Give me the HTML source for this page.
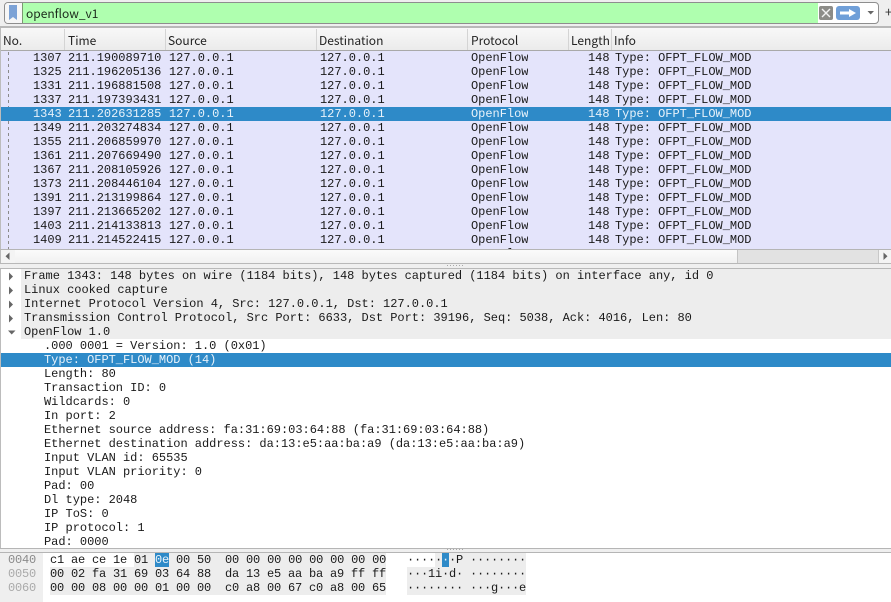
<!DOCTYPE html>
<html><head><meta charset="utf-8">
<style>
html,body{margin:0;padding:0;background:#efefef}
#r{position:relative;width:891px;height:602px;overflow:hidden;background:#efefef}
#r div{position:absolute}
.m{font:12px/14px "Liberation Mono",monospace;color:#1a1a1a;white-space:pre;letter-spacing:-.02px}
.s{font:12px/16px "Noto Sans CJK SC","Liberation Sans",sans-serif;color:#222;white-space:pre}
.hs{top:29px;width:1px;height:21px;background:#d4d4d4}
.hh{top:33px}
.l{top:51px;height:199px;overflow:hidden}
.w{color:#e8f2fa}
.dots{height:1px;width:18px;background:repeating-linear-gradient(90deg,#a8a8a8 0 1px,transparent 1px 3px)}
</style></head><body><div id="r">

<!-- filter bar -->
<div style="left:4px;top:2px;width:873px;height:20px;border:1px solid #8e8e8e;border-radius:4px;background:#fff"></div>
<div style="left:5px;top:3px;width:17px;height:20px;background:#f6f6f6;border-radius:3px 0 0 3px"></div>
<svg style="position:absolute;left:9px;top:5px" width="9" height="16"><path d="M0 0H8V15L4 12L0 15Z" fill="#7ba2d6"/></svg>
<div style="left:22px;top:3px;width:1px;height:20px;background:#7a9a70"></div>
<div style="left:23px;top:3px;width:795px;height:20px;background:#afffaf"></div>
<div class="s" style="left:26px;top:6px;color:#1c2a1c">openflow_v1</div>
<svg style="position:absolute;left:819px;top:6px" width="15" height="15"><rect width="14" height="14" x="0" y="0" rx="2" fill="#8c8c88"/><path d="M3 3L11 11M11 3L3 11" stroke="#f2f2f2" stroke-width="1.4"/></svg>
<svg style="position:absolute;left:836px;top:6px" width="25" height="15"><rect width="24" height="14" rx="3" fill="#6f9fd8"/><path d="M4 5.5H13V3L20 7L13 11V8.5H4Z" fill="#fff"/></svg>
<svg style="position:absolute;left:867px;top:10px" width="8" height="6"><path d="M0.5 1H7L3.7 4.5Z" fill="#666"/></svg>
<div class="s" style="left:885px;top:4px;font-size:13px;color:#333">+</div>

<!-- list header -->
<div style="left:0;top:26px;width:891px;height:2px;background:#b8b8b8"></div>
<div style="left:0;top:28px;width:891px;height:22px;background:linear-gradient(#f8f8f8,#ebebeb)"></div>
<div style="left:0;top:50px;width:891px;height:1px;background:#a9a9a9"></div>
<div style="left:0;top:28px;width:1px;height:236px;background:#bcbcbc"></div>
<div class="hs" style="left:64px"></div><div class="hs" style="left:165px"></div><div class="hs" style="left:316px"></div><div class="hs" style="left:467px"></div><div class="hs" style="left:568px"></div><div class="hs" style="left:611px"></div>
<div class="s hh" style="left:3px">No.</div>
<div class="s hh" style="left:68px">Time</div>
<div class="s hh" style="left:168px">Source</div>
<div class="s hh" style="left:319px">Destination</div>
<div class="s hh" style="left:471px">Protocol</div>
<div class="s hh" style="left:571px">Length</div>
<div class="s hh" style="left:614px">Info</div>

<!-- packet list -->
<div style="left:1px;top:51px;width:890px;height:198px;background:#e4e4fb"></div>
<div style="left:1px;top:107px;width:890px;height:14px;background:#2e8ac8"></div>
<div style="left:8px;top:52px;width:1px;height:55px;background:repeating-linear-gradient(#8a8a8a 0 3px,transparent 3px 6px)"></div>
<div style="left:8px;top:121px;width:1px;height:128px;background:repeating-linear-gradient(#8a8a8a 0 3px,transparent 3px 6px)"></div>
<div class="m l" style="left:33px">1307
1325
1331
1337
<span class="w">1343</span>
1349
1355
1361
1367
1373
1391
1397
1403
1409
1415</div>
<div class="m l" style="left:68px;height:198px">211.190089710
211.196205136
211.196881508
211.197393431
<span class="w">211.202631285</span>
211.203274834
211.206859970
211.207669490
211.208105926
211.208446104
211.213199864
211.213665202
211.214133813
211.214522415
211.215473210</div>
<div class="m l" style="left:169px;height:198px">127.0.0.1
127.0.0.1
127.0.0.1
127.0.0.1
<span class="w">127.0.0.1</span>
127.0.0.1
127.0.0.1
127.0.0.1
127.0.0.1
127.0.0.1
127.0.0.1
127.0.0.1
127.0.0.1
127.0.0.1
127.0.0.1</div>
<div class="m l" style="left:320px;height:198px">127.0.0.1
127.0.0.1
127.0.0.1
127.0.0.1
<span class="w">127.0.0.1</span>
127.0.0.1
127.0.0.1
127.0.0.1
127.0.0.1
127.0.0.1
127.0.0.1
127.0.0.1
127.0.0.1
127.0.0.1
127.0.0.1</div>
<div class="m l" style="left:471px;height:198px">OpenFlow
OpenFlow
OpenFlow
OpenFlow
<span class="w">OpenFlow</span>
OpenFlow
OpenFlow
OpenFlow
OpenFlow
OpenFlow
OpenFlow
OpenFlow
OpenFlow
OpenFlow
OpenFlow</div>
<div class="m l" style="left:588px;height:198px">148
148
148
148
<span class="w">148</span>
148
148
148
148
148
148
148
148
148
148</div>
<div class="m l" style="left:615px;height:198px">Type: OFPT_FLOW_MOD
Type: OFPT_FLOW_MOD
Type: OFPT_FLOW_MOD
Type: OFPT_FLOW_MOD
<span class="w">Type: OFPT_FLOW_MOD</span>
Type: OFPT_FLOW_MOD
Type: OFPT_FLOW_MOD
Type: OFPT_FLOW_MOD
Type: OFPT_FLOW_MOD
Type: OFPT_FLOW_MOD
Type: OFPT_FLOW_MOD
Type: OFPT_FLOW_MOD
Type: OFPT_FLOW_MOD
Type: OFPT_FLOW_MOD
Type: OFPT_FLOW_MOD</div>

<!-- horizontal scrollbar -->
<div style="left:0;top:249px;width:891px;height:1px;background:#b5b5b5"></div>
<div style="left:1px;top:250px;width:890px;height:13px;background:#f4f4f4"></div>
<div style="left:15px;top:250px;width:722px;height:13px;background:linear-gradient(#fbfbfb,#f1f1f1)"></div>
<div style="left:737px;top:250px;width:1px;height:13px;background:#c4c4c4"></div>
<div style="left:738px;top:250px;width:140px;height:13px;background:#e2e2e2"></div>
<div style="left:878px;top:250px;width:1px;height:13px;background:#c8c8c8"></div>
<svg style="position:absolute;left:5px;top:252px" width="6" height="9"><path d="M4.5 0.5V8L0.5 4.2Z" fill="#666"/></svg>
<svg style="position:absolute;left:883px;top:252px" width="6" height="9"><path d="M0.5 0.5V8L4.5 4.2Z" fill="#666"/></svg>
<div style="left:0;top:263px;width:891px;height:1px;background:#b8b8b8"></div>
<div class="dots" style="left:447px;top:265px"></div>
<div style="left:0;top:268px;width:891px;height:1px;background:#b8b8b8"></div>

<!-- details -->
<div style="left:0;top:269px;width:891px;height:279px;background:#fff"></div>
<div style="left:0;top:269px;width:1px;height:279px;background:#bcbcbc"></div>
<div style="left:21px;top:269px;width:870px;height:70px;background:#ededed"></div>
<div style="left:1px;top:353px;width:890px;height:14px;background:#2e8ac8"></div>
<svg style="position:absolute;left:8px;top:272px" width="8" height="70" fill="#666"><path d="M1 0.5V8.5L5 4.5Z"/><path d="M1 14.5V22.5L5 18.5Z"/><path d="M1 28.5V36.5L5 32.5Z"/><path d="M1 42.5V50.5L5 46.5Z"/><path d="M0 58.5H7.5L3.7 62.5Z"/></svg>
<div class="m" style="left:24px;top:269px">Frame 1343: 148 bytes on wire (1184 bits), 148 bytes captured (1184 bits) on interface any, id 0
Linux cooked capture
Internet Protocol Version 4, Src: 127.0.0.1, Dst: 127.0.0.1
Transmission Control Protocol, Src Port: 6633, Dst Port: 39196, Seq: 5038, Ack: 4016, Len: 80
OpenFlow 1.0</div>
<div class="m" style="left:44px;top:339px">.000 0001 = Version: 1.0 (0x01)
<span class="w">Type: OFPT_FLOW_MOD (14)</span>
Length: 80
Transaction ID: 0
Wildcards: 0
In port: 2
Ethernet source address: fa:31:69:03:64:88 (fa:31:69:03:64:88)
Ethernet destination address: da:13:e5:aa:ba:a9 (da:13:e5:aa:ba:a9)
Input VLAN id: 65535
Input VLAN priority: 0
Pad: 00
Dl type: 2048
IP ToS: 0
IP protocol: 1
Pad: 0000</div>
<div style="left:0;top:548px;width:891px;height:1px;background:#b5b5b5"></div>
<div class="dots" style="left:447px;top:549px"></div>
<div style="left:0;top:552px;width:891px;height:1px;background:#b5b5b5"></div>

<!-- hex -->
<div style="left:0;top:553px;width:891px;height:49px;background:#fff"></div>
<div style="left:0;top:553px;width:43px;height:49px;background:#efefef"></div>
<div style="left:134px;top:553px;width:252px;height:14px;background:#ededed"></div>
<div style="left:50px;top:567px;width:336px;height:28px;background:#ededed"></div>
<div style="left:435px;top:553px;width:91px;height:14px;background:#ededed"></div>
<div style="left:407px;top:567px;width:119px;height:28px;background:#ededed"></div>
<div style="left:155px;top:553px;width:14px;height:14px;background:#2e8ac8"></div>
<div style="left:442px;top:553px;width:7px;height:14px;background:#2e8ac8"></div>
<div class="m" style="left:8px;top:553px;letter-spacing:-.2px;color:#8a8a8a">0040</div>
<div class="m" style="left:8px;top:567px;letter-spacing:-.2px;color:#aaa">0050
0060</div>
<div class="m" style="left:50px;top:553px;letter-spacing:-.2px">c1 ae ce 1e 01 <span class="w">0e</span> 00 50  00 00 00 00 00 00 00 00
00 02 fa 31 69 03 64 88  da 13 e5 aa ba a9 ff ff
00 00 08 00 00 01 00 00  c0 a8 00 67 c0 a8 00 65</div>
<div class="m" style="left:407px;top:553px;letter-spacing:-.2px">·····<span class="w">·</span>·P ········
···1i·d· ········
········ ···g···e</div>
</div></body></html>
